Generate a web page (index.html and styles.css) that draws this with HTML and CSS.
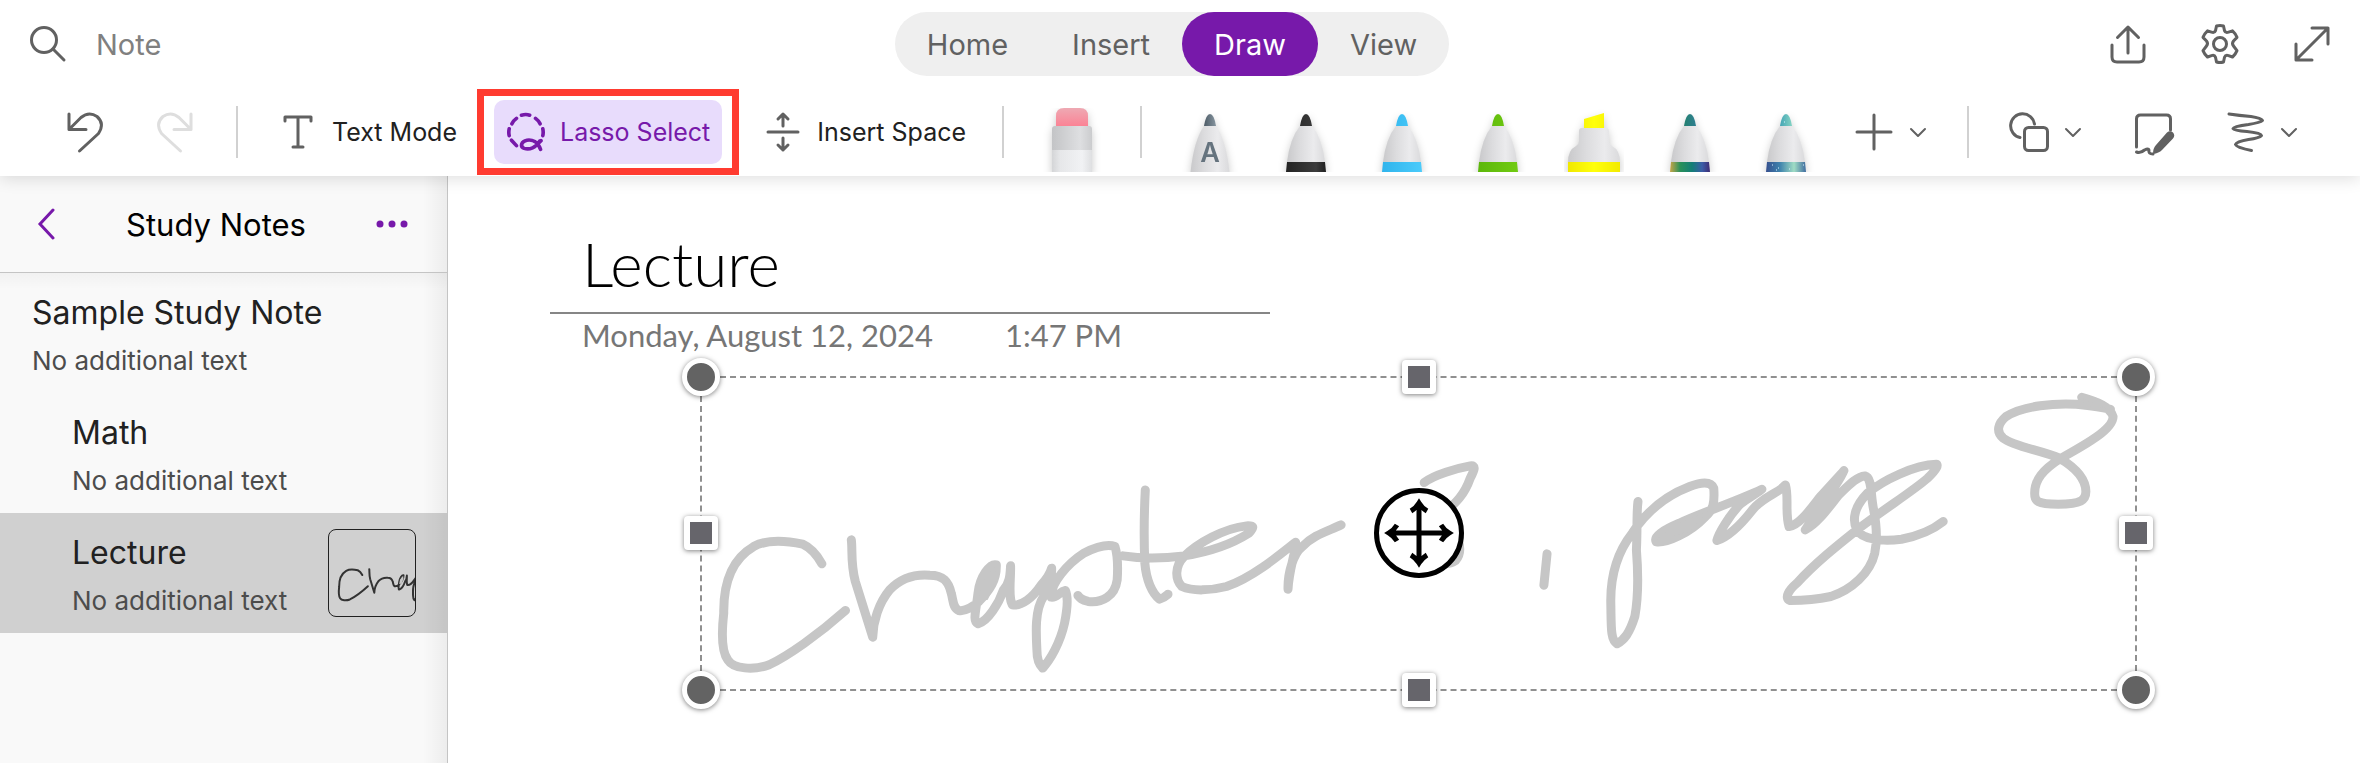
FILE: index.html
```html
<!DOCTYPE html>
<html lang="en">
<head>
<meta charset="utf-8">
<meta name="viewport" content="width=device-width, initial-scale=1">
<title>Study Notes</title>
<link rel="stylesheet" href="styles.css">
</head>
<body>
<header class="ribbon">
  <div class="topbar">
    <label class="search">
      <svg class="icon" viewBox="0 0 40 40" aria-hidden="true"><circle cx="16" cy="16" r="12.500"/><path d="M25 25l11 11"/></svg>
      <input class="search-input" type="text" placeholder="Note" aria-label="Search">
    </label>
    <nav class="tabs">
      <button class="tab">Home</button>
      <button class="tab">Insert</button>
      <button class="tab tab-active">Draw</button>
      <button class="tab">View</button>
    </nav>
    <div class="actions">
      <button class="icon-button" aria-label="Share"><svg class="icon" viewBox="0 0 40 40"><path d="M20 31V5M9.500 15.500L20 5l10.500 10.500M4 23v12q0 5 5 5h22q5 0 5-5V23" transform="translate(0 -2)"/></svg></button>
      <button class="icon-button" aria-label="Settings"><svg class="icon" viewBox="0 0 40 40"><circle cx="20" cy="20" r="6.500"/><path d="M16.500 2q3.500-1 7 0l1 4.600q1 2.600 4 1.600l4-1.400q3 2.600 4.500 6.600L33.500 17q-2 2.500 0 5l3.500 4.600q-1.500 3.800-4.500 6.400l-4-1.400q-3-1-4 1.600l-1 4.800q-3.500 1-7 0l-1-4.800q-1-2.600-4-1.600l-4 1.400q-3-2.600-4.500-6.400L6.500 22q2-2.500 0-5L3 13.400q1.500-4 4.500-6.600l4 1.400q3 1 4-1.600z"/></svg></button>
      <button class="icon-button" aria-label="Full screen"><svg class="icon" viewBox="0 0 40 40"><path d="M4 36L36 4M20 4h16v16M4 20v16h16"/></svg></button>
    </div>
  </div>
  <div class="toolbar">
    <div class="tools">
      <div class="history">
        <button class="icon-button" aria-label="Undo"><svg class="icon" viewBox="0 0 40 40"><path d="M5 2v15.500h17M5 17.500L17 5.500Q25-1 33 4.500q8 7 1.500 17L15.500 39" /></svg></button>
        <button class="icon-button disabled" aria-label="Redo" disabled><svg class="icon" viewBox="0 0 40 40"><path d="M37 2v15.500H20M37 17.500L25 5.500Q17-1 9 4.500q-8 7-1.500 17L26.500 39"/></svg></button>
      </div>
      <span class="divider"></span>
      <button class="text-button"><svg class="icon" viewBox="0 0 40 40"><path d="M7 9V5h26v4M20 5v30M15 35h10"/></svg>Text Mode</button>
      <div class="callout">
        <button class="text-button selected"><svg class="icon lasso" viewBox="0 0 42 44"><path d="M16 3.500q5-1.500 9 0M31.500 7q3.500 2.500 5 6M39.500 18.500q.8 4 0 7.500M37.500 31.500L33 36M10.500 7q-3.500 2.500-5 6M2.500 18.500q-.8 4 0 7.500M5 31l5.500 6M37 41c-3-8-9-11-15-10-6 1-8 7-3 9 6 2 13-1 17-8"/></svg>Lasso Select</button>
      </div>
      <button class="text-button"><svg class="icon" viewBox="0 0 40 40"><path d="M5 20h30M20 14V2M15 7l5-5 5 5M20 26v12M15 33l5 5 5-5"/></svg>Insert Space</button>
    </div>
    <div class="pens">
      <span class="divider"></span>
      <button class="pen eraser" aria-label="Eraser">
        <svg viewBox="0 0 60 64"><defs>
          <linearGradient id="pink" x2="0" y2="1"><stop stop-color="#eea9b3"/><stop offset="1" stop-color="#fb8395"/></linearGradient>
          <linearGradient id="collar"><stop stop-color="#c3c4c6"/><stop offset=".7" stop-color="#dedfe1"/><stop offset="1" stop-color="#cbccce"/></linearGradient>
          <linearGradient id="body"><stop stop-color="#d4d5d7"/><stop offset=".2" stop-color="#e6e7e9"/><stop offset=".75" stop-color="#f1f2f4"/><stop offset="1" stop-color="#dedfe1"/></linearGradient>
          <linearGradient id="cone"><stop stop-color="#c9c9cb"/><stop offset=".35" stop-color="#dcdcde"/><stop offset=".7" stop-color="#ebebed"/><stop offset="1" stop-color="#dadadc"/></linearGradient>
          <linearGradient id="lead"><stop stop-color="#4c5b66"/><stop offset="1" stop-color="#8795a0"/></linearGradient>
          <linearGradient id="black"><stop stop-color="#222"/><stop offset=".75" stop-color="#3c3c3c"/><stop offset="1" stop-color="#1f1f1f"/></linearGradient>
          <linearGradient id="blue"><stop stop-color="#2fb4ec"/><stop offset="1" stop-color="#4bcbfb"/></linearGradient>
          <linearGradient id="green"><stop stop-color="#5cb70a"/><stop offset="1" stop-color="#71cb12"/></linearGradient>
          <linearGradient id="yellow"><stop stop-color="#f0e800"/><stop offset=".5" stop-color="#ffff0c"/><stop offset="1" stop-color="#f2ea00"/></linearGradient>
          <linearGradient id="rainbow"><stop stop-color="#c9a548"/><stop offset=".25" stop-color="#2a9158"/><stop offset=".55" stop-color="#137e76"/><stop offset=".8" stop-color="#3b5da8"/><stop offset="1" stop-color="#3e2b73"/></linearGradient>
          <linearGradient id="teal"><stop stop-color="#23806f"/><stop offset="1" stop-color="#2f7f92"/></linearGradient>
          <linearGradient id="galaxy"><stop stop-color="#354f8e"/><stop offset=".35" stop-color="#3f83ad"/><stop offset=".7" stop-color="#9fdcc4"/><stop offset="1" stop-color="#3f6c9f"/></linearGradient>
          <linearGradient id="mint"><stop stop-color="#44a5b5"/><stop offset="1" stop-color="#84d3c3"/></linearGradient>
        </defs>
        <path fill="url(#pink)" d="M14 18V8q0-8 8-8h16q8 0 8 8v10z"/><path fill="url(#collar)" d="M10 42V21q0-3 3-3h34q3 0 3 3v21z"/><path fill="url(#body)" d="M10 42h40v22H10z"/></svg>
      </button>
      <span class="divider"></span>
      <div class="pen-row">
        <button class="pen" aria-label="Ink to text pen"><svg viewBox="0 0 60 64"><path fill="url(#cone)" d="M24 18h12Q46 32 49.500 64h-39Q14 32 24 18z"/><path fill="url(#lead)" d="M24 18q2-12 6-12t6 12z"/><text class="pen-letter" x="30" y="54">A</text></svg></button>
        <button class="pen" aria-label="Black pen"><svg viewBox="0 0 60 64"><path fill="url(#cone)" d="M24 18h12Q46 30 49 54H11Q14 30 24 18z"/><path fill="url(#black)" d="M24 18q2-12 6-12t6 12zM11 54h38l1 10H10z"/></svg></button>
        <button class="pen" aria-label="Blue pen"><svg viewBox="0 0 60 64"><path fill="url(#cone)" d="M24 18h12Q46 30 49 54H11Q14 30 24 18z"/><path fill="url(#blue)" d="M24 18q2-12 6-12t6 12zM11 54h38l1 10H10z"/></svg></button>
        <button class="pen" aria-label="Green pen"><svg viewBox="0 0 60 64"><path fill="url(#cone)" d="M24 18h12Q46 30 49 54H11Q14 30 24 18z"/><path fill="url(#green)" d="M24 18q2-12 6-12t6 12zM11 54h38l1 10H10z"/></svg></button>
        <button class="pen" aria-label="Yellow highlighter"><svg viewBox="0 0 60 64"><path fill="url(#cone)" d="M4 54q0-12 8-16 3-2 3-5V23q0-3 3-3h24q3 0 3 3v10q0 3 3 5 8 4 8 16z"/><path fill="url(#yellow)" d="M20 20v-9l20-6v15zM4 54h52v10H4z"/></svg></button>
        <button class="pen" aria-label="Rainbow pen"><svg viewBox="0 0 60 64"><path fill="url(#cone)" d="M24 18h12Q46 30 49 54H11Q14 30 24 18z"/><path fill="url(#teal)" d="M24 18q2-12 6-12t6 12z"/><path fill="url(#rainbow)" d="M11 54h38l1 10H10z"/></svg></button>
        <button class="pen" aria-label="Galaxy pen"><svg viewBox="0 0 60 64"><path fill="url(#cone)" d="M24 18h12Q46 30 49 54H11Q14 30 24 18z"/><path fill="url(#mint)" d="M24 18q2-12 6-12t6 12z"/><path fill="url(#galaxy)" d="M11 54h38l1 10H10z"/><path class="stars" d="M16 57h1M22 60h1M20 62h1M33 61h1M47 57h1M28 14h1"/></svg></button>
      </div>
      <button class="menu-button add-pen" aria-label="Add pen"><svg class="icon" viewBox="0 0 40 40"><path d="M20 3v34M3 20h34"/></svg><svg class="chevron" viewBox="0 0 18 18"><path d="M2 6l7 7 7-7"/></svg></button>
      <span class="divider"></span>
      <button class="menu-button" aria-label="Shapes"><svg class="icon" viewBox="0 0 40 40"><rect x="15.500" y="15.500" width="23" height="23" rx="4"/><path d="M11 25.500A12 12 0 1 1 25.500 12"/></svg><svg class="chevron" viewBox="0 0 18 18"><path d="M2 6l7 7 7-7"/></svg></button>
      <button class="menu-button ink-note" aria-label="Ink to note"><svg class="icon" viewBox="0 0 40 40"><path d="M1.500 35V7q0-4 4-4h26q4 0 4 4v11"/><path class="solid" d="M32 20.500q3-2.500 6 0 2.500 3 0 6L27 38q-3 3-9 4 0-6 3-9z"/><path d="M1.500 40q4 1.500 8-2 4-2 4.500 0-1 4 4 4"/></svg></button>
      <button class="menu-button" aria-label="Convert ink"><svg class="icon" viewBox="0 0 40 40"><path d="M4 2q10 1.500 22 2.500 10 1.500 11.500 4-2 2-14 4-15 2-15.500 4 1 2 14 3 14 1.500 14.500 4-2 2.500-13 4-12 2-13 5 1 3 16 6"/></svg><svg class="chevron" viewBox="0 0 18 18"><path d="M2 6l7 7 7-7"/></svg></button>
    </div>
  </div>
</header>
<div class="workspace">
  <aside class="sidebar">
    <div class="sidebar-head">
      <button class="purple" aria-label="Back"><svg class="nav-icon" viewBox="0 0 32 32"><path d="M21 2L8 16l13 14"/></svg></button>
      <h2 class="sidebar-title">Study Notes</h2>
      <button class="purple" aria-label="More options"><svg class="nav-icon dots" viewBox="0 0 32 32"><circle cx="4" cy="16" r="3.500"/><circle cx="16" cy="16" r="3.500"/><circle cx="28" cy="16" r="3.500"/></svg></button>
    </div>
    <ul class="pages">
      <li class="page-item"><div class="page-text"><div class="page-name">Sample Study Note</div><div class="page-preview">No additional text</div></div></li>
      <li class="page-item sub"><div class="page-text"><div class="page-name">Math</div><div class="page-preview">No additional text</div></div></li>
      <li class="page-item sub current"><div class="page-text"><div class="page-name">Lecture</div><div class="page-preview">No additional text</div></div>
        <svg class="thumb" viewBox="0 0 86 86" aria-hidden="true"><use href="#ink" transform="translate(5 0) scale(.236 .242)"/></svg>
      </li>
    </ul>
  </aside>
  <main class="canvas">
    <div class="note-head">
      <h1 class="note-title">Lecture</h1>
      <p class="note-date"><span>Monday, August 12, 2024</span><span>1:47 PM</span></p>
    </div>
    <div class="selection">
      <svg class="ink" viewBox="0 0 1434 311" role="img" aria-label="Handwritten ink">
        <g id="ink">
          <g transform="translate(-22 -28) scale(.4464 .3333)">
            <path d="M318 642C308 618 295 595 275 583C230 570 190 572 165 590C120 625 97 690 98 790C93 850 93 905 107 930C120 958 165 962 200 945C240 920 310 855 371 782"/>
            <path d="M384 570C387 600 382 640 393 695L432 862C433 815 445 760 470 720C495 685 525 672 560 676C590 676 602 695 608 730C613 755 612 775 625 782C640 786 660 768 670 755C695 720 710 690 709 645C695 640 672 680 668 730C664 780 655 815 668 822C690 815 715 760 725 720C740 700 740 670 741 648C742 690 735 740 745 765C765 770 790 745 810 705C820 690 830 670 833 655C835 690 820 710 815 740C795 780 798 850 800 900C800 930 805 945 813 955C830 930 852 880 862 820C868 780 870 740 864 722C850 725 845 745 832 742C830 700 870 640 905 610C935 590 960 583 975 590C982 620 982 650 980 690C975 740 945 760 915 755C900 750 897 745 892 737"/>
            <path class="wash" d="M668 755L676 700L705 650L709 690L690 750Z"/>
            <path d="M1043 420C1040 500 1040 580 1042 640C1045 690 1058 730 1075 748C1085 745 1090 738 1094 733M993 618C1040 628 1090 625 1130 618C1190 605 1240 580 1275 550C1290 530 1285 527 1270 528C1220 535 1160 580 1130 620C1108 650 1110 690 1125 710C1150 725 1190 722 1225 710C1280 685 1340 620 1380 577C1380 610 1365 660 1363 718C1362 670 1375 610 1395 590C1420 555 1450 545 1482 525"/>
          </g>
          <g transform="translate(638 -28) scale(.523 .3333)">
            <path d="M162 398C180 375 225 355 250 348C262 345 258 360 250 385C240 430 225 460 190 500M195 500C225 540 240 600 222 632C210 645 190 645 180 635M397 612L391 706"/>
            <path d="M571 455C568 490 570 540 568 600C572 680 572 740 565 800C555 850 545 870 531 882C518 870 520 830 519 760C518 680 530 610 560 550C585 490 620 440 670 410C700 392 712 400 716 415C718 460 715 480 700 500C670 550 625 580 606 576C600 560 620 540 650 520C690 490 750 460 808 418C790 440 775 450 765 465C745 500 725 550 722 572C745 560 770 520 790 480C810 440 840 430 853 405C860 440 852 490 860 530C880 525 900 480 920 440C940 405 955 380 965 362C955 400 930 450 910 490C900 520 893 535 891 540C915 520 935 475 955 435C975 405 990 380 1005 378C1020 385 1015 430 1022 480C1028 530 1028 580 1024 610C1015 670 980 720 940 740C910 750 880 752 862 752C850 745 860 720 875 700C910 640 950 590 990 540C1040 480 1100 420 1125 385C1145 355 1145 345 1142 343C1100 345 1040 390 1010 430C985 470 980 510 990 540C1000 570 1040 575 1075 568C1110 558 1135 540 1155 515"/>
            <path class="wash" d="M606 570L650 520L705 485L670 545Z"/>
            <path d="M1420 142C1450 155 1475 170 1480 200C1480 240 1420 290 1380 325C1345 360 1330 390 1330 430C1330 455 1335 463 1375 463C1420 462 1428 450 1428 425C1428 390 1410 355 1378 325C1340 300 1290 290 1270 265C1255 245 1260 220 1275 200C1310 165 1370 160 1410 163C1440 168 1460 172 1475 178"/>
            <path class="wash" d="M1420 145L1470 178L1425 165Z"/>
          </g>
        </g>
      </svg>
      <span class="handle corner top left"></span>
      <span class="handle side top center"></span>
      <span class="handle corner top right"></span>
      <span class="handle side middle left"></span>
      <span class="handle side middle right"></span>
      <span class="handle corner bottom left"></span>
      <span class="handle side bottom center"></span>
      <span class="handle corner bottom right"></span>
      <svg class="move middle center" viewBox="0 0 92 92" aria-hidden="true"><circle cx="46" cy="46" r="42.500"/><path d="M46 15v62M15 46h62M38 24q5-3 8-8 3 5 8 8M38 68q5 3 8 8 3-5 8-8M24 38q-3 5-8 8 5 3 8 8M68 38q3 5 8 8-5 3-8 8"/></svg>
    </div>
  </main>
</div>
</body>
</html>
```

FILE: styles.css
```css
* { box-sizing: border-box; }

body {
  margin: 0;
  min-height: 100vh;
  display: flex;
  flex-direction: column;
  font-family: Inter, "Liberation Sans", sans-serif;
  color: #212121;
  background: #fff;
}

button {
  border: 0;
  padding: 0;
  background: none;
  font: inherit;
  color: inherit;
  display: flex;
  align-items: center;
}

svg { display: block; flex: none; }

/* Ribbon */
.ribbon {
  position: relative;
  z-index: 1;
  background: #fff;
  box-shadow: 0 2px 16px rgba(0, 0, 0, 0.14);
}

.topbar {
  height: 88px;
  padding: 0 28px;
  display: grid;
  grid-template-columns: 1fr auto 1fr;
  align-items: center;
}

.icon {
  width: 40px;
  height: 40px;
  overflow: visible;
  fill: none;
  stroke: #616161;
  stroke-width: 3;
  stroke-linecap: round;
  stroke-linejoin: round;
}

.search { display: flex; align-items: center; gap: 28px; }

.search-input {
  border: 0;
  padding: 0;
  outline: 0;
  width: 300px;
  background: none;
  font: 29px Inter, "Liberation Sans", sans-serif;
}

.search-input::placeholder { color: #808080; opacity: 1; }

.tabs {
  height: 64px;
  margin-right: 16px;
  display: flex;
  border-radius: 32px;
  background: #efefef;
}

.tab {
  padding: 0 32px;
  border-radius: 32px;
  font-size: 29px;
  color: #616161;
}

.tab-active { background: #7719aa; color: #fff; }

.actions { display: flex; justify-content: flex-end; gap: 52px; }

.toolbar {
  height: 88px;
  padding: 0 62px 0 64px;
  display: flex;
  justify-content: space-between;
}

.tools, .pens, .history, .pen-row { display: flex; align-items: center; }

.history { gap: 50px; margin-right: 2px; }

.disabled .icon { stroke: #dedede; }

.divider {
  width: 2px;
  height: 52px;
  margin: 0 40px;
  background: #d1d1d1;
}

.divider:first-child { margin-left: 0; }

.text-button { gap: 14px; font-size: 25px; white-space: nowrap; }

.callout {
  margin: 0 24px 0 20px;
  padding: 4px 10px;
  border: 7px solid #ff3b30;
}

.selected {
  height: 64px;
  padding: 0 12px;
  border-radius: 10px;
  background: #e8dcfc;
  color: #7719aa;
}

.lasso { stroke: #7719aa; stroke-width: 4; }

.pen {
  width: 60px;
  height: 64px;
  align-self: flex-end;
  margin-bottom: 4px;
  overflow: hidden;
}

.pen svg {
  width: 60px;
  height: 64px;
  filter: drop-shadow(0 4px 4px rgba(0, 0, 0, 0.22));
}

.eraser { margin: 0 -2px 4px; }

.pen-row { gap: 36px; align-self: flex-end; margin-left: -2px; }

.pen-letter {
  font: 600 27px Inter, "Liberation Sans", sans-serif;
  text-anchor: middle;
  fill: #65737e;
}

.stars { stroke: #d9f3ff; stroke-width: 1; }

.menu-button { gap: 15px; margin-right: 45px; }
.menu-button:last-child { margin-right: 0; }
.menu-button.add-pen { margin: 0 0 0 38px; }
.menu-button.ink-note { margin: 0 50px 0 8px; }

.chevron {
  width: 18px;
  height: 18px;
  fill: none;
  stroke: #616161;
  stroke-width: 2;
  stroke-linecap: round;
  stroke-linejoin: round;
}

.solid { fill: #616161; stroke: none; }

/* Page list */
.workspace { flex: 1; display: flex; }

.sidebar {
  flex: none;
  width: 448px;
  border-right: 1px solid #c4c4c4;
  background: linear-gradient(to left, rgba(0, 0, 0, 0.05), transparent 24px) #f9f9f9;
}

.sidebar-head {
  height: 97px;
  padding: 0 39px 0 32px;
  display: flex;
  align-items: center;
  justify-content: space-between;
  border-bottom: 1px solid #c4c4c4;
}

.nav-icon {
  width: 32px;
  height: 32px;
  fill: none;
  stroke: #7719aa;
  stroke-width: 3;
  stroke-linecap: round;
}

.dots { fill: #7719aa; stroke: none; }

.sidebar-title {
  margin: 0 8px 0 0;
  font-size: 31px;
  font-weight: 400;
  color: #000;
}

.pages {
  margin: 0;
  padding: 0;
  list-style: none;
  background: linear-gradient(rgba(0, 0, 0, 0.03), transparent 16px);
}

.page-item {
  height: 120px;
  padding: 0 31px 0 32px;
  display: flex;
  align-items: center;
  justify-content: space-between;
}

.sub { padding-left: 72px; }
.current { background: rgba(0, 0, 0, 0.165); }
.page-text { padding-top: 8px; }
.page-name { font-size: 32px; line-height: 48px; }
.page-preview { font-size: 26px; line-height: 48px; color: #4c4c4c; }

.thumb {
  width: 88px;
  height: 88px;
  border: 1px solid #212121;
  border-radius: 8px;
  overflow: hidden;
  fill: none;
  stroke: #333;
  stroke-width: 2;
  stroke-linecap: round;
  stroke-linejoin: round;
}

/* Note */
.canvas { flex: 1; padding: 44px 223px 0 102px; }

.note-head { width: 720px; }

.note-title {
  margin: 0;
  padding: 0 32px 6px;
  border-bottom: 2px solid #868686;
  font: 300 62px/86px Lato, "Open Sans", sans-serif;
  color: #000;
}

.note-date {
  margin: 0;
  padding: 0 32px;
  display: flex;
  gap: 72px;
  font: 31px/42px Lato, "Open Sans", sans-serif;
  color: #767676;
}

.selection {
  position: relative;
  margin: 20px 0 0 150px;
  border: 2px dashed #909090;
}

.ink {
  width: 100%;
  height: auto;
  overflow: visible;
  fill: none;
  stroke: #c6c6c6;
  stroke-width: 9;
  stroke-linecap: round;
  stroke-linejoin: round;
}

#ink path { vector-effect: non-scaling-stroke; }
.ink .wash { fill: #c6c6c6; stroke: none; }

.handle, .move { position: absolute; transform: translate(-50%, -50%); }
.top { top: -1px; }
.middle { top: 50%; }
.bottom { top: calc(100% + 1px); }
.left { left: -1px; }
.center { left: 50%; }
.right { left: calc(100% + 1px); }

.handle {
  border: 5px solid #fff;
  background: #66656b;
  box-shadow: 0 1px 5px rgba(0, 0, 0, 0.5);
}

.corner {
  width: 38px;
  height: 38px;
  border-radius: 50%;
  background: #636363;
}

.side {
  width: 34px;
  height: 34px;
  border-width: 6px;
  border-radius: 4px;
}

.move {
  width: 92px;
  height: 92px;
  fill: none;
  stroke: #000;
  stroke-width: 5;
}

.move circle { fill: #fff; }
```
